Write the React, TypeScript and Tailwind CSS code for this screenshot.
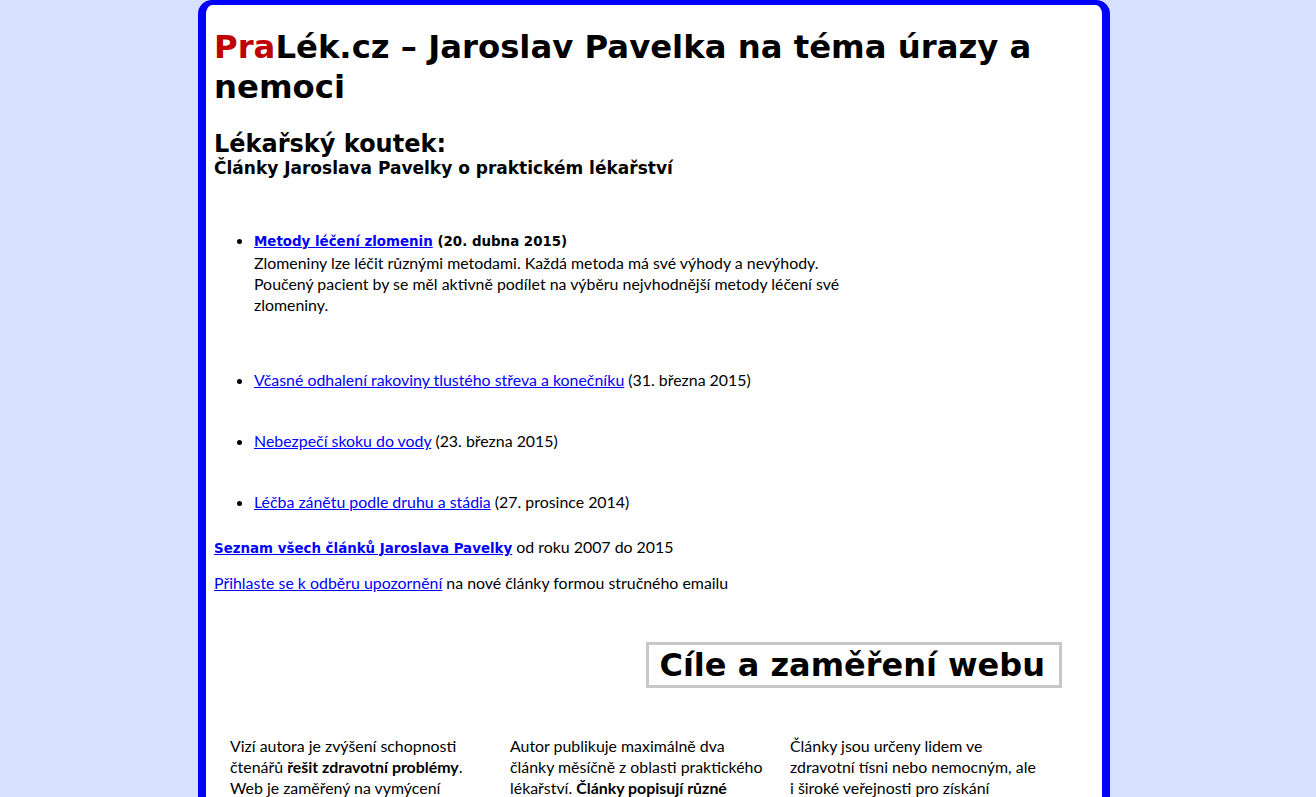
import React from 'react';

const articles = [
  { title: 'Včasné odhalení rakoviny tlustého střeva a konečníku', date: '31. března 2015' },
  { title: 'Nebezpečí skoku do vody', date: '23. března 2015' },
  { title: 'Léčba zánětu podle druhu a stádia', date: '27. prosince 2014' },
];

const App: React.FC = () => {
  return (
    <div className="min-h-screen bg-[#d8e0ff] flex justify-center pr-[8px]">
      <div className="w-[912px] bg-white border-[8px] border-t-[5px] border-[#0000ff] rounded-[14px] px-[8px] pt-[22px] pb-10 font-['Lato',sans-serif] text-[15.9px] leading-[21px] text-black">
        {/* Header */}
        <h1 className="font-['DejaVu_Sans',sans-serif] font-bold text-[32.3px] leading-[40px]">
          <span className="text-[#c00000]">Pra</span>Lék.cz – Jaroslav Pavelka na téma úrazy a nemoci
        </h1>
        <h2 className="mt-[23px] font-['DejaVu_Sans',sans-serif] font-bold text-[24px] leading-[28px]">Lékařský koutek:</h2>
        <div className="font-['DejaVu_Sans',sans-serif] font-bold text-[17px] leading-[20px]">
          Články Jaroslava Pavelky o praktickém lékařství
        </div>

        {/* Articles */}
        <ul className="mt-[51px] pl-[40px] list-disc marker:text-black">
          <li className="w-[620px]">
            <span className="font-['DejaVu_Sans',sans-serif] font-bold text-[13.4px]">
              <a href="#" className="text-[#0000ff] underline">Metody léčení zlomenin</a> (20. dubna 2015)
            </span>
            <br />
            Zlomeniny lze léčit různými metodami. Každá metoda má své výhody a nevýhody. Poučený pacient by se měl aktivně podílet na výběru nejvhodnější metody léčení své zlomeniny.
          </li>
          {articles.map((a, i) => (
            <li key={a.title} className={i === 0 ? 'mt-[54px]' : 'mt-[40px]'}>
              <a href="#" className="text-[#0000ff] underline">{a.title}</a> ({a.date})
            </li>
          ))}
        </ul>

        <p className="mt-[24px]">
          <a href="#" className="font-['DejaVu_Sans',sans-serif] font-bold text-[13.4px] text-[#0000ff] underline">
            Seznam všech článků Jaroslava Pavelky
          </a>{' '}
          od roku 2007 do 2015
        </p>
        <p className="mt-[13px]">
          <a href="#" className="text-[#0000ff] underline">Přihlaste se k odběru upozornění</a> na nové články formou stručného emailu
        </p>

        {/* Goals */}
        <div className="flex justify-end mt-[49px] pr-[32px]">
          <h2 className="border-[3px] border-[#c8c8c8] pl-[10px] pr-[14px] font-['DejaVu_Sans',sans-serif] font-bold text-[32px] leading-[40px]">
            Cíle a zaměření webu
          </h2>
        </div>

        <div className="mt-[47px] ml-[16px] grid grid-cols-3 w-[840px]">
          <p className="w-[256px]">
            Vizí autora je zvýšení schopnosti čtenářů <b>řešit zdravotní problémy</b>. Web je zaměřený na vymýcení
            nejrozšířenějších mýtů a pověr o nemocech a úrazech.
          </p>
          <p className="w-[256px]">
            Autor publikuje maximálně dva články měsíčně z oblasti praktického lékařství. <b>Články popisují různé
            způsoby léčby</b> a jejich výhody i nevýhody.
          </p>
          <p className="w-[256px]">
            Články jsou určeny lidem ve zdravotní tísni nebo nemocným, ale i{'\u00a0'}široké veřejnosti pro získání
            základních znalostí o zdraví.
          </p>
        </div>
      </div>
    </div>
  );
};

export default App;
